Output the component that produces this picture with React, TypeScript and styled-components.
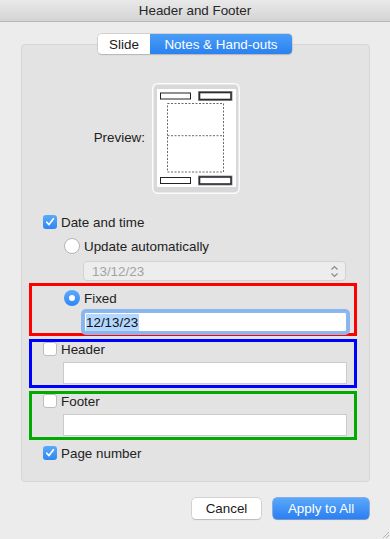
import React from "react";
import styled, { createGlobalStyle } from "styled-components";

const Global = createGlobalStyle`
  html, body { margin: 0; padding: 0; }
  body { font-family: "Liberation Sans", Arial, sans-serif; font-size: 13.4px; color: #222; }
`;

const Window = styled.div`
  width: 390px;
  height: 539px;
  background: #ececec;
  display: flex;
  flex-direction: column;
  overflow: hidden;
  position: relative;
`;

const TitleBar = styled.div`
  height: 21px;
  border-bottom: 1px solid #b8b8b8;
  background: linear-gradient(#e9e9e9, #d4d4d4);
  display: flex;
  align-items: center;
  justify-content: center;
  font-size: 13.4px;
  color: #262626;
`;

const Tabs = styled.div`
  align-self: center;
  margin-top: 12px;
  margin-bottom: -10px;
  height: 20px;
  display: flex;
  position: relative;
  z-index: 1;
  border-radius: 4px;
  box-shadow: 0 0 0 0.5px #b9b9b9, 0 0.5px 1px rgba(0,0,0,0.2);
  overflow: hidden;
`;

const Tab = styled.div<{ $active?: boolean; $w: number }>`
  width: ${(p) => p.$w}px;
  display: flex;
  align-items: center;
  justify-content: center;
  font-size: 13.4px;
  color: ${(p) => (p.$active ? "#fff" : "#1a1a1a")};
  background: ${(p) => (p.$active ? "linear-gradient(#4a9ef7, #2a81f1)" : "#fff")};
`;

const Group = styled.div`
  margin: 0 20px 0 21px;
  height: 438px;
  box-sizing: border-box;
  border: 1px solid #d6d6d6;
  border-radius: 4px;
  background: #e3e3e3;
  padding-top: 38px;
  display: flex;
  flex-direction: column;
`;

const PreviewRow = styled.div`
  display: flex;
  align-items: center;
  height: 111px;
`;

const PreviewLabel = styled.div`
  width: 130px;
  text-align: right;
  padding-right: 7px;
  box-sizing: border-box;
  margin-top: -2px;
`;

const Row = styled.div<{ $indent: number; $top: number; $h?: number }>`
  display: flex;
  align-items: center;
  gap: 4px;
  margin-left: ${(p) => p.$indent}px;
  margin-top: ${(p) => p.$top}px;
  height: ${(p) => p.$h ?? 18}px;
  white-space: nowrap;
`;

const Check = styled.span<{ $on?: boolean }>`
  width: 14px;
  height: 14px;
  box-sizing: border-box;
  border-radius: 3px;
  flex: none;
  display: flex;
  align-items: center;
  justify-content: center;
  background: ${(p) => (p.$on ? "linear-gradient(#5aaafb, #2f86f3)" : "#fff")};
  border: ${(p) => (p.$on ? "none" : "1px solid #bdbdbd")};
`;

const Radio = styled.span<{ $on?: boolean }>`
  width: 16px;
  height: 16px;
  box-sizing: border-box;
  border-radius: 50%;
  flex: none;
  display: flex;
  align-items: center;
  justify-content: center;
  background: ${(p) => (p.$on ? "linear-gradient(#5aaafb, #2f86f3)" : "#fff")};
  border: ${(p) => (p.$on ? "none" : "1px solid #b5b5b5")};
  &::after {
    content: "";
    display: ${(p) => (p.$on ? "block" : "none")};
    width: 6px;
    height: 6px;
    border-radius: 50%;
    background: #fff;
  }
`;

const Popup = styled.div`
  margin-left: 61px;
  margin-top: 6px;
  width: 263px;
  height: 20px;
  box-sizing: border-box;
  border: 1px solid #d2d2d2;
  border-radius: 4px;
  background: #ededed;
  color: #a3a3a3;
  display: flex;
  align-items: center;
  justify-content: space-between;
  padding: 0 6px 0 8px;
`;

const Annot = styled.div<{ $color: string; $top: number }>`
  margin-left: 7px;
  margin-top: ${(p) => p.$top}px;
  width: 328px;
  box-sizing: border-box;
  border: 3px solid ${(p) => p.$color};
  padding-bottom: 1px;
  display: flex;
  flex-direction: column;
`;

const TextField = styled.div<{ $indent: number; $top: number; $h: number; $focus?: boolean }>`
  margin-left: ${(p) => p.$indent}px;
  margin-top: ${(p) => p.$top}px;
  width: ${(p) => 322 - p.$indent - 7}px;
  height: ${(p) => p.$h}px;
  box-sizing: border-box;
  background: #fff;
  border: 1px solid ${(p) => (p.$focus ? "#8fb8ee" : "#cbcbcb")};
  border-radius: ${(p) => (p.$focus ? 2 : 0)}px;
  box-shadow: ${(p) => (p.$focus ? "0 0 0 3px #8ab6f0" : "none")};
  display: flex;
  align-items: center;
  padding-left: 1px;
  font-size: 13.4px;
  color: #111;
`;

const Selected = styled.span`
  background: #b3d7ff;
  padding: 1px 1px 1px 0;
`;

const Footer = styled.div`
  display: flex;
  justify-content: flex-end;
  gap: 12px;
  margin: 16px 21px 0 0;
`;

const Button = styled.div<{ $primary?: boolean; $w: number }>`
  width: ${(p) => p.$w}px;
  height: 21px;
  box-sizing: border-box;
  border-radius: 4px;
  display: flex;
  align-items: center;
  justify-content: center;
  font-size: 13.4px;
  color: ${(p) => (p.$primary ? "#fff" : "#1a1a1a")};
  background: ${(p) => (p.$primary ? "linear-gradient(#5aa8fa, #2b7ff1)" : "#fff")};
  box-shadow: ${(p) =>
    p.$primary ? "0 0 0 0.5px #2a74de, 0 0.5px 1px rgba(0,0,0,0.2)" : "0 0 0 0.5px #bcbcbc, 0 0.5px 1px rgba(0,0,0,0.2)"};
`;

const Grip = styled.svg`
  position: absolute;
  right: 1px;
  bottom: 1px;
`;

const Tick = () => (
  <svg width="10" height="10" viewBox="0 0 10 10">
    <path d="M1.8 5.2 L4 7.6 L8.4 1.8" fill="none" stroke="#fff" strokeWidth="1.7" strokeLinecap="round" strokeLinejoin="round" />
  </svg>
);

const Chevrons = () => (
  <svg width="9" height="13" viewBox="0 0 9 13">
    <path d="M1.5 4.5 L4.5 1.5 L7.5 4.5 M1.5 8.5 L4.5 11.5 L7.5 8.5" fill="none" stroke="#8a8a8a" strokeWidth="1.2" />
  </svg>
);

const PreviewArt = () => (
  <svg width="88" height="111" viewBox="0 0 88 111">
    <rect x="0.75" y="0.75" width="86.5" height="109.5" rx="5" fill="#d8d8d8" stroke="#fbfbfb" strokeWidth="1.5" />
    <rect x="5" y="6" width="79" height="98" fill="#fff" />
    <rect x="8.5" y="10" width="30" height="6" fill="#fff" stroke="#222" strokeWidth="1" />
    <rect x="47.5" y="9.5" width="31.5" height="7" fill="none" stroke="#9a9a9a" strokeWidth="3" />
    <rect x="47.5" y="9.5" width="31.5" height="7" fill="#fff" stroke="#2b2b33" strokeWidth="1.6" />
    <rect x="15.5" y="20.5" width="56" height="68.5" fill="none" stroke="#6a6a6a" strokeWidth="1" strokeDasharray="2 1.5" />
    <line x1="15.5" y1="52.7" x2="71.5" y2="52.7" stroke="#6a6a6a" strokeWidth="1" strokeDasharray="2 1.5" />
    <rect x="8.5" y="94.5" width="30" height="6" fill="#fff" stroke="#222" strokeWidth="1" />
    <rect x="47.5" y="94" width="31.5" height="7" fill="none" stroke="#9a9a9a" strokeWidth="3" />
    <rect x="47.5" y="94" width="31.5" height="7" fill="#fff" stroke="#2b2b33" strokeWidth="1.6" />
  </svg>
);

export default function App() {
  return (
    <>
      <Global />
      <Window>
        <TitleBar>Header and Footer</TitleBar>
        <Tabs>
          <Tab $w={52}>Slide</Tab>
          <Tab $w={142} $active>Notes &amp; Hand-outs</Tab>
        </Tabs>
        <Group>
          <PreviewRow>
            <PreviewLabel>Preview:</PreviewLabel>
            <PreviewArt />
          </PreviewRow>
          <Row $indent={21} $top={19}>
            <Check $on><Tick /></Check>
            <span>Date and time</span>
          </Row>
          <Row $indent={42} $top={6}>
            <Radio />
            <span>Update automatically</span>
          </Row>
          <Popup>
            <span>13/12/23</span>
            <Chevrons />
          </Popup>
          <Annot $color="#ff0000" $top={2}>
            <Row $indent={32} $top={3}>
              <Radio $on />
              <span>Fixed</span>
            </Row>
            <TextField $indent={52} $top={5} $h={20} $focus>
              <Selected>12/13/23</Selected>
            </TextField>
          </Annot>
          <Annot $color="#0000ff" $top={3}>
            <Row $indent={11} $top={0} $h={14}>
              <Check />
              <span>Header</span>
            </Row>
            <TextField $indent={31} $top={6} $h={22} />
          </Annot>
          <Annot $color="#00aa00" $top={3}>
            <Row $indent={11} $top={0} $h={14}>
              <Check />
              <span>Footer</span>
            </Row>
            <TextField $indent={31} $top={6} $h={22} />
          </Annot>
          <Row $indent={21} $top={4}>
            <Check $on><Tick /></Check>
            <span>Page number</span>
          </Row>
        </Group>
        <Footer>
          <Button $w={69}>Cancel</Button>
          <Button $w={96} $primary>Apply to All</Button>
        </Footer>
        <Grip width="6" height="6" viewBox="0 0 6 6">
          <path d="M0 6 L6 0 M3 6 L6 3" stroke="#a8a8a8" strokeWidth="0.8" />
        </Grip>
      </Window>
    </>
  );
}
